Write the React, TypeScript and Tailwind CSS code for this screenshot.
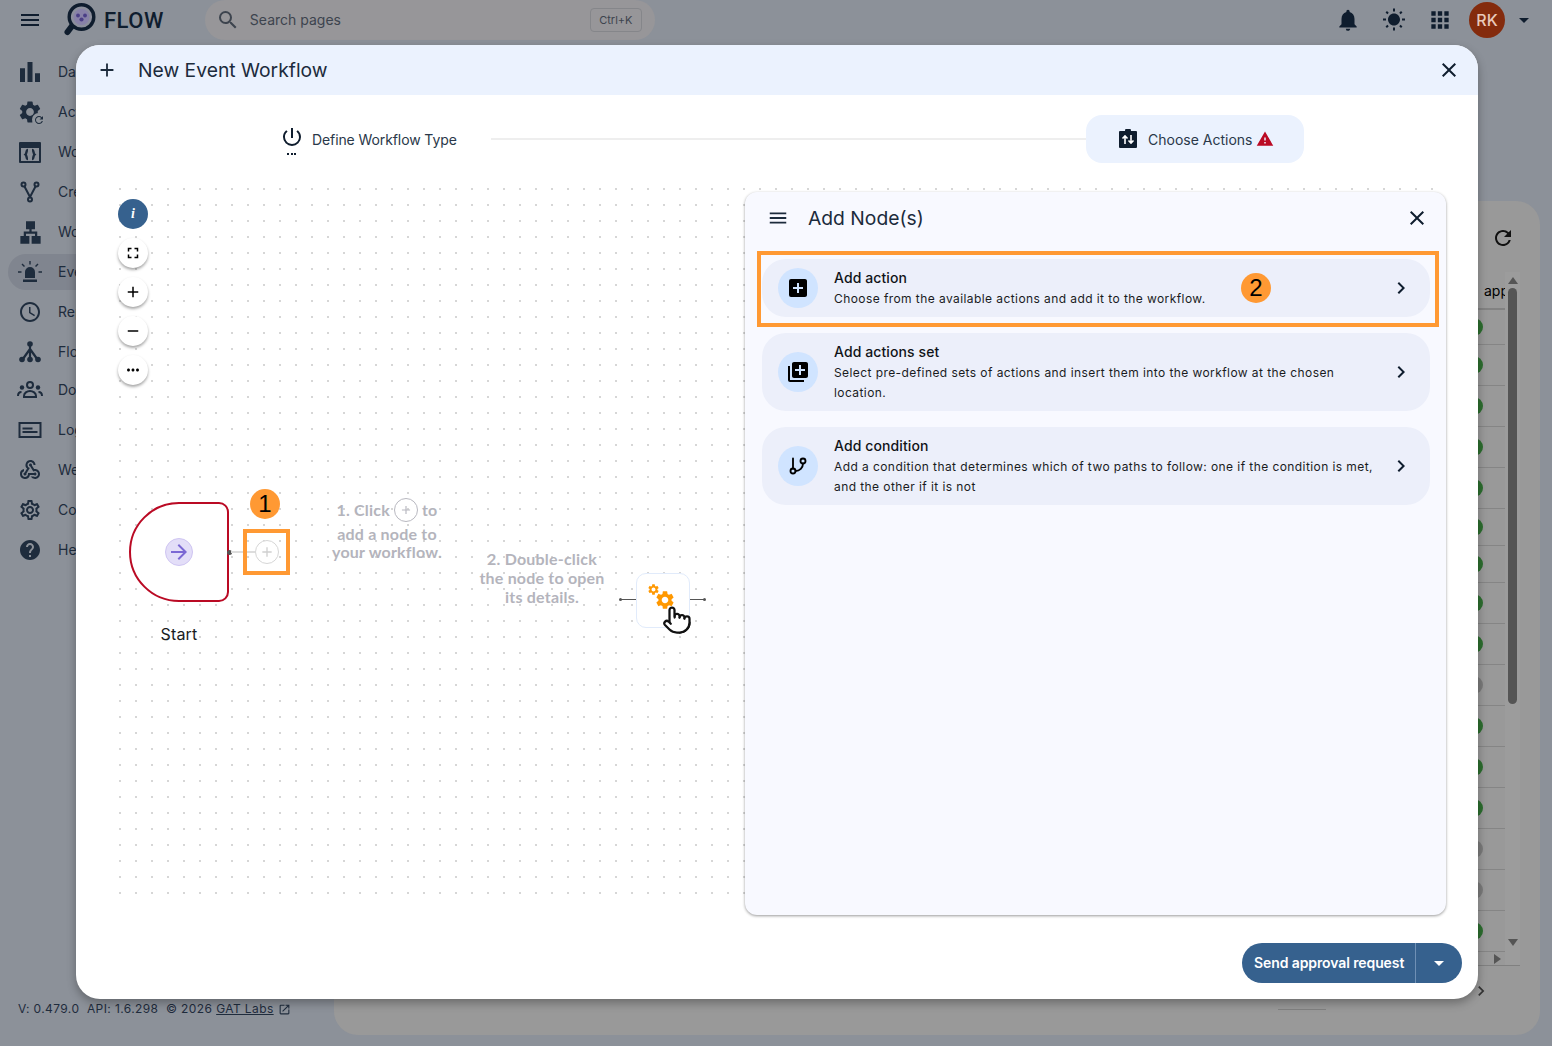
import type { ReactNode } from 'react'
import {
  MdMenu, MdSearch, MdNotifications, MdWbSunny, MdApps, MdArrowDropDown, MdClose, MdAdd, MdRemove,
  MdPowerSettingsNew, MdWarning, MdAddBox, MdLibraryAdd, MdChevronRight, MdRefresh, MdOpenInNew,
  MdBarChart, MdSettings, MdLan, MdOutlineSchedule, MdWebhook, MdOutlineSettings, MdHelp,
  MdMoreHoriz, MdFullscreen, MdArrowForward,
} from 'react-icons/md'
import { GitBranch, Pointer } from 'lucide-react'

function ActionsIcon() {
  return (
    <span className="relative block h-[26px] w-[26px]">
      <MdSettings size={26} />
      <span className="absolute right-[-2px] bottom-[-1px] flex h-[13px] w-[13px] items-center justify-center rounded-full bg-[#8f949b]">
        <MdRefresh size={12} />
      </span>
    </span>
  )
}

function WindowCodeIcon() {
  return (
    <svg width="24" height="24" viewBox="0 0 24 24">
      <path fillRule="evenodd" fill="currentColor" d="M2 2h20a1 1 0 0 1 1 1v19a1 1 0 0 1-1 1H2a1 1 0 0 1-1-1V3a1 1 0 0 1 1-1zm1 6v13h18V8z" />
      <path d="M10 10c-2 0-1 3-2.500 4.500 1.500 1 .5 4.500 2.500 4.500M14 10c2 0 1 3 2.500 4.500-1.500 1-.5 4.500-2.500 4.500" fill="none" stroke="currentColor" strokeWidth="2.400" />
    </svg>
  )
}

function ForkIcon() {
  return (
    <svg width="24" height="24" viewBox="0 0 24 24" fill="none" stroke="currentColor" strokeWidth="2">
      <path d="M6.500 6.500 12 17M17.500 6.500 12 17" />
      <circle cx="5.500" cy="4.500" r="2" />
      <circle cx="18.500" cy="4.500" r="2" />
      <circle cx="12" cy="19.500" r="2" />
    </svg>
  )
}

function SirenIcon() {
  return (
    <svg width="24" height="24" viewBox="0 0 24 24" fill="currentColor">
      <path d="M7 18v-6a5 5 0 0 1 10 0v6zM5 19.500h14V22H5zM11.300 1h1.400v3.500h-1.400zM0 11.300h3.500v1.400H0zM20.500 11.300H24v1.400h-3.500zM3.500 4.500l1-1L7 6 6 7zM20.500 4.500l-1-1L17 6l1 1z" />
    </svg>
  )
}

function FlowIcon() {
  return (
    <svg width="24" height="24" viewBox="0 0 24 24" fill="none" stroke="currentColor" strokeWidth="2.200">
      <path d="M12 4v15M12 9 4.500 19.500M12 9l7.500 10.500" />
      <g fill="currentColor" stroke="none">
        <circle cx="12" cy="4" r="2.800" />
        <circle cx="4" cy="19.500" r="2.800" />
        <circle cx="12" cy="19.500" r="2.800" />
        <circle cx="20" cy="19.500" r="2.800" />
      </g>
    </svg>
  )
}

function GroupsIcon() {
  return (
    <svg width="26" height="26" viewBox="0 0 26 26" fill="none" stroke="currentColor" strokeWidth="2">
      <circle cx="13" cy="8" r="3" />
      <circle cx="5" cy="10.500" r="2.200" fill="currentColor" stroke="none" />
      <circle cx="21" cy="10.500" r="2.200" fill="currentColor" stroke="none" />
      <path d="M7 19c0-3 3-5 6-5s6 2 6 5" />
      <path d="M1 19c0-2.500 1.500-4 3.500-4M25 19c0-2.500-1.500-4-3.500-4M6 20h14" />
    </svg>
  )
}

function LogsIcon() {
  return (
    <svg width="24" height="24" viewBox="0 0 24 24" fill="none" stroke="currentColor">
      <rect x="1.500" y="5" width="21" height="14" strokeWidth="2" />
      <path d="M4.500 10.500h10M4.500 14h15" strokeWidth="2" />
    </svg>
  )
}

function ChooseActionsIcon() {
  return (
    <svg width="20" height="20" viewBox="0 0 20 20">
      <path fill="#0f1d2e" d="M2 2h5a3 3 0 0 1 6 0h5a1 1 0 0 1 1 1v15a1 1 0 0 1-1 1H2a1 1 0 0 1-1-1V3a1 1 0 0 1 1-1z" />
      <path d="M7 15V7M4.500 9.500 7 7l2.500 2.500M13 6v8M10.500 11.500 13 14l2.500-2.500" fill="none" stroke="#fff" strokeWidth="1.600" />
    </svg>
  )
}

function Logo() {
  return (
    <svg width="36" height="38" viewBox="0 0 36 38">
      <path d="M10 25 5.500 31" stroke="#0f1d2e" strokeWidth="6" strokeLinecap="round" />
      <circle cx="19.500" cy="16" r="12.300" fill="#8c8f9c" stroke="#0f1d2e" strokeWidth="3.400" />
      <circle cx="19.500" cy="16" r="8" fill="#8781a8" />
      <circle cx="16" cy="14.500" r="1.900" fill="#4b3f86" />
      <circle cx="23" cy="14.500" r="1.900" fill="#4b3f86" />
      <circle cx="19.500" cy="18.500" r="2.100" fill="#4b3f86" />
    </svg>
  )
}

const navItems: { label: string; icon: ReactNode; active?: boolean }[] = [
  { label: 'Dashboard', icon: <MdBarChart size={30} /> },
  { label: 'Actions', icon: <ActionsIcon /> },
  { label: 'Workspaces', icon: <WindowCodeIcon /> },
  { label: 'Create', icon: <ForkIcon /> },
  { label: 'Workflows', icon: <MdLan size={27} /> },
  { label: 'Events', icon: <SirenIcon />, active: true },
  { label: 'Reports', icon: <MdOutlineSchedule size={24} /> },
  { label: 'Flows', icon: <FlowIcon /> },
  { label: 'Domains', icon: <GroupsIcon /> },
  { label: 'Logs', icon: <LogsIcon /> },
  { label: 'Webhooks', icon: <MdWebhook size={24} /> },
  { label: 'Config', icon: <MdOutlineSettings size={24} /> },
  { label: 'Help', icon: <MdHelp size={24} /> },
]

const rowHeights = [35, 41, 41, 41, 41, 37, 37, 41, 41, 41, 41, 41, 41, 41, 41, 41]
const grayRows = [9, 13, 14]

function BackgroundTable() {
  return (
    <div className="mt-[22px] flex w-[80px] self-end mr-[20px] border-b border-[#808080]">
      <div className="w-[65px]">
        <div className="flex h-[38px] items-center justify-end overflow-hidden border-b-2 border-[#828282] pt-[2px] text-sm whitespace-nowrap text-black">
          <span className="mr-[-4px]">app</span>
        </div>
        {rowHeights.map((h, i) => (
          <div key={i} style={{ height: h }} className="flex items-center border-b border-[#858585] pl-[25px]">
            <span className={`h-[18px] w-[18px] rounded-full ${grayRows.includes(i) ? 'bg-[#7b7b7b]' : 'bg-[#2c6e2f]'}`} />
          </div>
        ))}
        <div className="flex h-[13px] items-center justify-end pr-[4px]">
          <span className="h-0 w-0 border-y-[5px] border-l-[7px] border-y-transparent border-l-[#555555]" />
        </div>
      </div>
      <div className="flex w-[15px] flex-col items-center bg-[#9c9c9c] pt-[5px]">
        <span className="h-0 w-0 border-x-[5px] border-b-[7px] border-x-transparent border-b-[#555555]" />
        <span className="mt-[4px] h-[416px] w-[9px] rounded-full bg-[#555555]" />
        <span className="mt-[235px] h-0 w-0 border-x-[5px] border-t-[7px] border-x-transparent border-t-[#555555]" />
      </div>
    </div>
  )
}

function CanvasButton({ children }: { children: ReactNode }) {
  return (
    <button className="flex h-[30px] w-[30px] items-center justify-center rounded-full bg-white text-black shadow-[0_2px_3px_rgba(0,0,0,0.35)]">
      {children}
    </button>
  )
}

function AddItem({ icon, title, desc }: { icon: ReactNode; title: string; desc: string }) {
  return (
    <div className="flex items-center rounded-[24px] bg-[#eceffa] py-[9px] pl-4 pr-[17px]">
      <span className="flex h-10 w-10 shrink-0 items-center justify-center rounded-full bg-[#d0e4ff] text-black">{icon}</span>
      <div className="ml-4 min-w-0 flex-1 pr-[4px]">
        <div className="text-sm leading-5 font-medium tracking-[0.1px] text-[#111418]">{title}</div>
        <div className="mt-px -mb-px text-xs leading-5 tracking-[0.42px] text-[#1a1c1e]">{desc}</div>
      </div>
      <MdChevronRight size={24} className="ml-[4px] shrink-0 text-[#0f1d2e]" />
    </div>
  )
}

function Badge({ n, className }: { n: number; className: string }) {
  return (
    <span className={`absolute flex h-[30px] w-[30px] items-center justify-center rounded-full bg-[#ff9933] text-[24px] leading-none text-black [font-family:'Liberation_Sans',sans-serif] ${className}`}>
      {n}
    </span>
  )
}

function Hint({ children, className }: { children: ReactNode; className: string }) {
  return (
    <div className={`absolute text-center text-base font-bold tracking-[0.2px] text-[#b4b4bc] [font-family:Lato,sans-serif] ${className}`}>
      {children}
    </div>
  )
}

function Canvas() {
  return (
    <div className="relative mt-[18px] ml-9 mr-[38px] h-[725px] bg-[radial-gradient(circle,#a6a6a6_0.6px,transparent_0.8px)] bg-[size:16px_16px]">
      <div className="absolute left-[6px] top-[18px] flex flex-col gap-[9px]">
        <button className="flex h-[30px] w-[30px] items-center justify-center rounded-full bg-[#36618e] text-sm font-bold italic text-white [font-family:'Liberation_Serif',serif]">i</button>
        <CanvasButton><MdFullscreen size={18} /></CanvasButton>
        <CanvasButton><MdAdd size={18} /></CanvasButton>
        <CanvasButton><MdRemove size={18} /></CanvasButton>
        <CanvasButton><MdMoreHoriz size={18} /></CanvasButton>
      </div>

      {/* start node */}
      <div className="absolute left-[17px] top-[321px] flex h-[100px] w-[100px] items-center justify-center rounded-l-[50px] rounded-r-[10px] border-2 border-[#ba0a24] bg-white">
        <span className="flex h-7 w-7 items-center justify-center rounded-full border border-[#cfc5f2] bg-[#e3def8] text-[#7b68d4]">
          <MdArrowForward size={24} />
        </span>
      </div>
      <span className="absolute left-[115px] top-[369px] h-[5px] w-[5px] rounded-full bg-[#555555]" />
      <span className="absolute left-[119px] top-[370px] h-[2px] w-[24px] bg-[#dddddd]" />
      <span className="absolute left-[143px] top-[359px] flex h-6 w-6 items-center justify-center rounded-full border border-[#d6d6d6] bg-white text-[#cfcfcf]">
        <MdAdd size={16} />
      </span>
      <div className="absolute left-[131px] top-[348px] h-[46px] w-[47px] border-4 border-[#ff9933]" />
      <Badge n={1} className="left-[138px] top-[308px]" />
      <div className="absolute left-[17px] top-[443px] w-[100px] text-center text-base leading-5 tracking-[0.15px] text-[#1a1c1e]">Start</div>

      <Hint className="left-[215px] top-[316px] w-[120px] leading-[24px]">
        <div className="mt-px flex items-center justify-center">
          1. Click
          <span className="mx-[4px] flex h-6 w-6 items-center justify-center rounded-full border border-[#b8b8c0] text-[#b8b8c0]"><MdAdd size={14} /></span>
          to
        </div>
        <div className="leading-[23px]">add a node to</div>
        <div className="leading-[14px]">your workflow.</div>
      </Hint>
      <Hint className="left-[355px] top-[368px] w-[150px] leading-[19px]">
        2. Double-click<br />the node to open<br />its details.
      </Hint>

      {/* sample node */}
      <span className="absolute left-[508px] top-[418px] h-px w-[17px] bg-[#555555]" />
      <span className="absolute left-[507px] top-[417px] h-[3px] w-[3px] rounded-full bg-[#555555]" />
      <span className="absolute left-[577px] top-[418px] h-px w-[16px] bg-[#555555]" />
      <span className="absolute left-[591px] top-[417px] h-[3px] w-[3px] rounded-full bg-[#555555]" />
      <div className="absolute left-[524px] top-[392px] h-[55px] w-[54px] rounded-[10px] border border-[#e1ebfb] bg-white" />
      <MdSettings size={13} className="absolute left-[535px] top-[402px] text-[#ff9800]" />
      <MdSettings size={22} className="absolute left-[542px] top-[408px] text-[#ff9800]" />
      <Pointer size={30} strokeWidth={1.8} className="absolute left-[550px] top-[424px] fill-white text-[#111111]" />

      {/* add node panel */}
      <div className="absolute left-[633px] top-[11px] flex h-[723px] w-[701px] flex-col rounded-xl bg-[#f8f9ff] shadow-[0_1px_3px_rgba(0,0,0,0.4)]">
        <div className="flex h-[52px] items-center pl-[22px] pr-[17px] text-[#1c2b3c]">
          <MdMenu size={22} />
          <span className="ml-[19px] flex-1 text-[19.3px]">Add Node(s)</span>
          <MdClose size={24} className="text-[#0f1d2e]" />
        </div>
        <div className="mt-[15px] flex flex-col gap-4 pl-[17px] pr-4">
          <AddItem icon={<MdAddBox size={24} />} title="Add action" desc="Choose from the available actions and add it to the workflow." />
          <AddItem icon={<MdLibraryAdd size={24} />} title="Add actions set" desc="Select pre-defined sets of actions and insert them into the workflow at the chosen location." />
          <AddItem icon={<GitBranch size={20} strokeWidth={2.2} />} title="Add condition" desc="Add a condition that determines which of two paths to follow: one if the condition is met, and the other if it is not" />
        </div>
        <div className="absolute left-[12px] top-[59px] h-[76px] w-[682px] border-4 border-[#ff9933]" />
        <Badge n={2} className="left-[496px] top-[81px]" />
      </div>
    </div>
  )
}

function Modal() {
  return (
    <div className="absolute left-[76px] top-[45px] flex h-[954px] w-[1402px] flex-col overflow-hidden rounded-[24px] bg-white shadow-[0_4px_10px_rgba(0,0,0,0.3)]">
      <div className="flex h-[50px] shrink-0 items-center bg-[#ebf2fe] pl-[20px] pr-[17px] text-[#1c2b3c]">
        <MdAdd size={22} />
        <span className="ml-5 flex-1 text-[19.3px]">New Event Workflow</span>
        <MdClose size={24} className="text-[#0f1d2e]" />
      </div>

      <div className="mt-5 flex h-12 shrink-0 items-center pl-[204px] pr-[174px] text-sm text-[#2a3849]">
        <span className="relative block h-6 w-6 text-[#0f1d2e]">
          <MdPowerSettingsNew size={24} className="-mt-[2px]" />
          <span className="absolute bottom-[-4px] left-[7px] flex gap-[1.5px]">
            <span className="h-[2px] w-[2px] bg-[#0f1d2e]" />
            <span className="h-[2px] w-[2px] bg-[#0f1d2e]" />
            <span className="h-[2px] w-[2px] bg-[#0f1d2e]" />
          </span>
        </span>
        <span className="ml-2 mt-[2px] tracking-[-0.1px]">Define Workflow Type</span>
        <span className="ml-[34px] h-[2px] flex-1 bg-[#eeeeee]" />
        <div className="flex h-12 w-[218px] items-center rounded-[16px] bg-[#ebf2fe] pl-8">
          <ChooseActionsIcon />
          <span className="ml-[10px] mt-[2px]">Choose Actions</span>
          <MdWarning size={18} className="ml-[4px] text-[#ba0a24]" />
        </div>
      </div>

      <Canvas />

      <div className="mt-auto flex justify-end pb-4 pr-4">
        <div className="flex h-10 w-[220px] items-center rounded-full bg-[#36618e] text-white">
          <span className="flex-1 pl-3 text-sm font-semibold tracking-[-0.1px]">Send approval request</span>
          <span className="h-10 w-px bg-[#6f90b5]" />
          <span className="flex w-[46px] items-center justify-center pr-[1px]"><MdArrowDropDown size={24} /></span>
        </div>
      </div>
    </div>
  )
}

export default function App() {
  return (
    <div className="relative flex h-[1046px] w-[1552px] flex-col overflow-hidden bg-[#8c9199] text-[#0f1d2e] [font-family:Inter,sans-serif]">
      <header className="flex h-10 shrink-0 items-center">
        <MdMenu size={24} className="ml-[18px]" />
        <span className="ml-5"><Logo /></span>
        <span className="ml-[6px] text-[22px] font-medium tracking-[0.5px] [font-family:Roboto,sans-serif]">FLOW</span>
        <div className="ml-[41px] flex h-10 w-[450px] items-center rounded-full bg-[#979699] pl-[11px] pr-[13px] text-[#3d444e]">
          <MdSearch size={24} />
          <span className="ml-[10px] flex-1 text-sm">Search pages</span>
          <span className="flex h-6 w-[52px] items-center justify-center rounded border border-[#85868a] text-[11px]">Ctrl+K</span>
        </div>
        <div className="ml-auto flex items-center">
          <MdNotifications size={26} />
          <MdWbSunny size={24} className="ml-[21px]" />
          <MdApps size={26} className="ml-[21px]" />
          <span className="ml-[16px] flex h-9 w-9 items-center justify-center rounded-full bg-[#842b0d] text-base font-medium text-[#e8c9bb]">RK</span>
          <MdArrowDropDown size={24} className="ml-[7px] mr-4" />
        </div>
      </header>

      <div className="flex min-h-0 flex-1">
        <aside className="flex w-[334px] shrink-0 flex-col pt-[14px]">
          {navItems.map((item) => (
            <div
              key={item.label}
              className={`ml-2 flex h-9 items-center rounded-l-full text-sm text-[#1e2c3d] ${item.label === 'Flows' ? 'mb-[2px]' : 'mb-1'} ${item.active ? 'bg-[#80858f]' : ''}`}
            >
              <span className="flex w-11 justify-center">{item.icon}</span>
              <span className="ml-[6px]">{item.label}</span>
            </div>
          ))}
          <div className="mt-auto mb-[29px] ml-[18px] flex items-center text-xs tracking-[0.4px] whitespace-pre text-[#1f2c3d]">
            <span>V: 0.479.0  API: 1.6.298  © 2026 </span>
            <span className="underline">GAT Labs</span>
            <MdOpenInNew size={13} className="ml-[4px]" />
          </div>
        </aside>

        <main className="mt-[161px] mb-[11px] mr-3 flex flex-1 flex-col rounded-[24px] bg-[#999999]">
          <div className="mt-[25px] mr-[25px] self-end text-[#111111]"><MdRefresh size={24} /></div>
          <BackgroundTable />
          <div className="mr-[49px] mt-[15px] self-end text-[#333333]"><MdChevronRight size={20} /></div>
          <div className="mr-[214px] mt-[8px] h-px w-[48px] self-end bg-[#808080]" />
        </main>
      </div>

      <Modal />
    </div>
  )
}
